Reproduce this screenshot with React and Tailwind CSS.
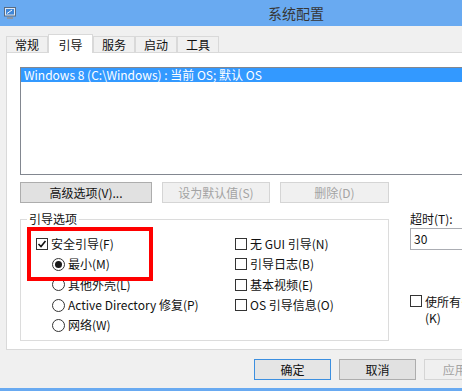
import React from 'react';

const font = { fontFamily: '"Noto Sans CJK SC", "Liberation Sans", sans-serif' };

const CheckBox = ({ checked }) => (
  <span className="w-[12px] h-[12px] border border-[#333333] bg-white flex items-center justify-center shrink-0">
    {checked && (
      <svg width="10" height="10" viewBox="0 0 10 10">
        <path d="M1.5 5 L4 7.5 L8.5 2" fill="none" stroke="#111" strokeWidth="1.6" />
      </svg>
    )}
  </span>
);

const Radio = ({ checked }) => (
  <span className="w-[13px] h-[13px] rounded-full border border-[#333333] bg-white flex items-center justify-center shrink-0">
    {checked && <span className="w-[7px] h-[7px] rounded-full bg-[#1a1a1a]" />}
  </span>
);

const Btn = ({ children, w, disabled, primary }) => (
  <div
    className={`h-[21px] flex items-center justify-center text-[12px] border shrink-0 ${
      disabled
        ? 'bg-[#f0f0f0] border-[#d5d5d5] text-[#a3a3a3]'
        : primary
        ? 'bg-[#e5e5e5] border-[#3c8fe0] text-[#111]'
        : 'bg-[#e1e1e1] border-[#adadad] text-[#111]'
    }`}
    style={{ width: w }}
  >
    {children}
  </div>
);

const Tab = ({ label, active }) =>
  active ? (
    <div className="relative z-10 w-[45px] h-[19px] -mb-[1px] bg-white border border-b-0 border-[#d9d9d9] flex justify-center pt-[1px] text-[12px] text-[#111]">
      {label}
    </div>
  ) : (
    <div className="w-[42px] h-[16px] bg-[#f0f0f0] border border-b-0 border-[#d9d9d9] flex items-center justify-center text-[12px] text-[#111] leading-none">
      {label}
    </div>
  );

export default function App() {
  return (
    <div className="w-[462px] h-[391px] bg-[#f0f0f0] overflow-hidden relative flex flex-col" style={font}>
      {/* title bar */}
      <div className="h-[26px] bg-[#69aaf1] flex items-center shrink-0">
        <svg className="ml-[4px]" width="12" height="13" viewBox="0 0 12 13">
          <rect x="0.5" y="0.5" width="11" height="8.5" fill="#dfe9f5" stroke="#5a6b80" />
          <rect x="2" y="2" width="8" height="5.5" fill="#3f86d8" />
          <path d="M3 6.5 L8 3" stroke="#ffffff" strokeWidth="1" />
          <rect x="3" y="10" width="6" height="2" fill="#8a96a6" />
        </svg>
        <span className="ml-[252px] text-[14px] text-[#363636]">系统配置</span>
      </div>

      {/* tabs */}
      <div className="mt-[8px] pl-[6px] h-[18px] flex items-end shrink-0">
        <Tab label="常规" />
        <Tab label="引导" active />
        <Tab label="服务" />
        <Tab label="启动" />
        <Tab label="工具" />
      </div>

      {/* tab panel */}
      <div className="ml-[6px] w-[470px] h-[298px] bg-white border border-[#d9d9d9] pl-[13px] pt-[14px] shrink-0 flex flex-col">
        <div className="w-[460px] h-[108px] border border-[#828790] bg-white shrink-0">
          <div className="h-[14px] bg-[#3399ff] text-white text-[12px] leading-[14px] pl-[3px] whitespace-nowrap">
            Windows 8 (C:\Windows) : 当前 OS; 默认 OS
          </div>
        </div>

        <div className="mt-[7px] flex gap-[10px]">
          <Btn w={132}>高级选项(V)...</Btn>
          <Btn w={108} disabled>设为默认值(S)</Btn>
          <Btn w={109} disabled>删除(D)</Btn>
        </div>

        <div className="mt-[8px] flex">
          {/* boot options group */}
          <div className="relative shrink-0 mt-[8px] w-[369px] h-[122px] border border-[#dcdcdc] pl-[15px] pt-[14px] text-[12px] text-[#111]">
            <span className="absolute -top-[9px] left-[6px] bg-white px-[2px] leading-[16px]">引导选项</span>
            <div className="grid grid-cols-[199px_1fr]">
              <div className="flex flex-col">
                <div className="h-[20px] flex items-center gap-[3px]">
                  <CheckBox checked />
                  <span>安全引导(F)</span>
                </div>
                <div className="h-[20px] pl-[16px] flex items-center gap-[3px]">
                  <Radio checked />
                  <span>最小(M)</span>
                </div>
                <div className="h-[21px] pl-[16px] flex items-center gap-[3px]">
                  <Radio />
                  <span>其他外壳(L)</span>
                </div>
                <div className="h-[20px] pl-[16px] flex items-center gap-[3px]">
                  <Radio />
                  <span>Active Directory 修复(P)</span>
                </div>
                <div className="h-[20px] pl-[16px] flex items-center gap-[3px]">
                  <Radio />
                  <span>网络(W)</span>
                </div>
              </div>
              <div className="flex flex-col whitespace-nowrap">
                <div className="h-[20px] flex items-center gap-[3px]">
                  <CheckBox />
                  <span>无 GUI 引导(N)</span>
                </div>
                <div className="h-[20px] flex items-center gap-[3px]">
                  <CheckBox />
                  <span>引导日志(B)</span>
                </div>
                <div className="h-[21px] flex items-center gap-[3px]">
                  <CheckBox />
                  <span>基本视频(E)</span>
                </div>
                <div className="h-[20px] flex items-center gap-[3px]">
                  <CheckBox />
                  <span>OS 引导信息(O)</span>
                </div>
              </div>
            </div>
          </div>

          {/* timeout column */}
          <div className="ml-[21px] shrink-0 flex flex-col text-[12px] text-[#111]">
            <span className="leading-[16px]">超时(T):</span>
            <div className="mt-[1px] w-[90px] h-[22px] border border-[#abadb3] bg-white flex items-center pl-[3px]">30</div>
            <div className="mt-[44px] flex gap-[3px]">
              <span className="mt-[1px]"><CheckBox /></span>
              <div className="flex flex-col leading-[16px] whitespace-nowrap">
                <span>使所有引导设置成为永久设置</span>
                <span>(K)</span>
              </div>
            </div>
          </div>
        </div>
      </div>

      {/* dialog buttons */}
      <div className="mt-[9px] pl-[254px] flex gap-[8px] shrink-0">
        <Btn w={77} primary>确定</Btn>
        <Btn w={77}>取消</Btn>
        <Btn w={77} disabled>应用(A)</Btn>
      </div>

      <div className="mt-auto h-[3px] bg-[#69aaf1] shrink-0" />

      {/* red highlight annotation */}
      <div className="absolute left-[27px] top-[227px] w-[126px] h-[54px] border-4 border-[#ff0000] z-20" />
    </div>
  );
}
